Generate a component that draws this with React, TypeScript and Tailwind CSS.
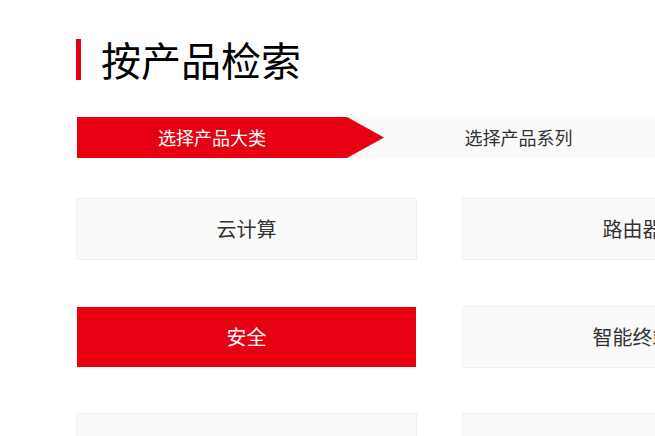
import React from "react";

const font = { fontFamily: '"Noto Sans CJK SC", "Noto Sans", sans-serif' };

const rows: { label: string; active?: boolean }[][] = [
  [{ label: "云计算" }, { label: "路由器" }],
  [{ label: "安全", active: true }, { label: "智能终端" }],
  [{ label: "" }, { label: "" }],
];

export default function App() {
  return (
    <div className="w-[655px] h-[436px] overflow-hidden bg-white" style={font}>
      <div className="pl-[76px] pt-[39px] w-[1200px]">
        <div className="flex items-center h-[41px]">
          <div className="w-[5px] h-[41px] bg-[#e60012]" />
          <h1 className="ml-[20px] text-[40px] leading-[41px] text-black font-normal">按产品检索</h1>
        </div>

        <div className="mt-[37px] ml-[1px] flex h-[41px] bg-[#fafafa] w-[1000px]">
          <div className="relative flex h-full">
            <div className="w-[270px] h-full bg-[#e60012] flex items-center justify-center text-white text-[18px]">
              选择产品大类
            </div>
            <svg width="37" height="41" viewBox="0 0 37 41" className="block">
              <polygon points="0,0 37,20.5 0,41" fill="#e60012" />
            </svg>
          </div>
          <div className="w-[269px] h-full flex items-center justify-center text-[#333] text-[18px]">
            选择产品系列
          </div>
        </div>

        <div className="mt-[40px] grid grid-cols-[341px_341px] gap-x-[45px] gap-y-[45.5px]">
          {rows.flat().map((c, i) => (
            <div
              key={i}
              className={
                c.active
                  ? "h-[62px] bg-white p-px"
                  : "h-[62px] bg-[#fafafa] border border-[#f0f0f0] flex items-center justify-center text-[#333] text-[20px]"
              }
            >
              {c.active ? (
                <div className="h-full w-full bg-[#e60012] flex items-center justify-center text-white text-[20px]">
                  {c.label}
                </div>
              ) : (
                c.label
              )}
            </div>
          ))}
        </div>
      </div>
    </div>
  );
}
